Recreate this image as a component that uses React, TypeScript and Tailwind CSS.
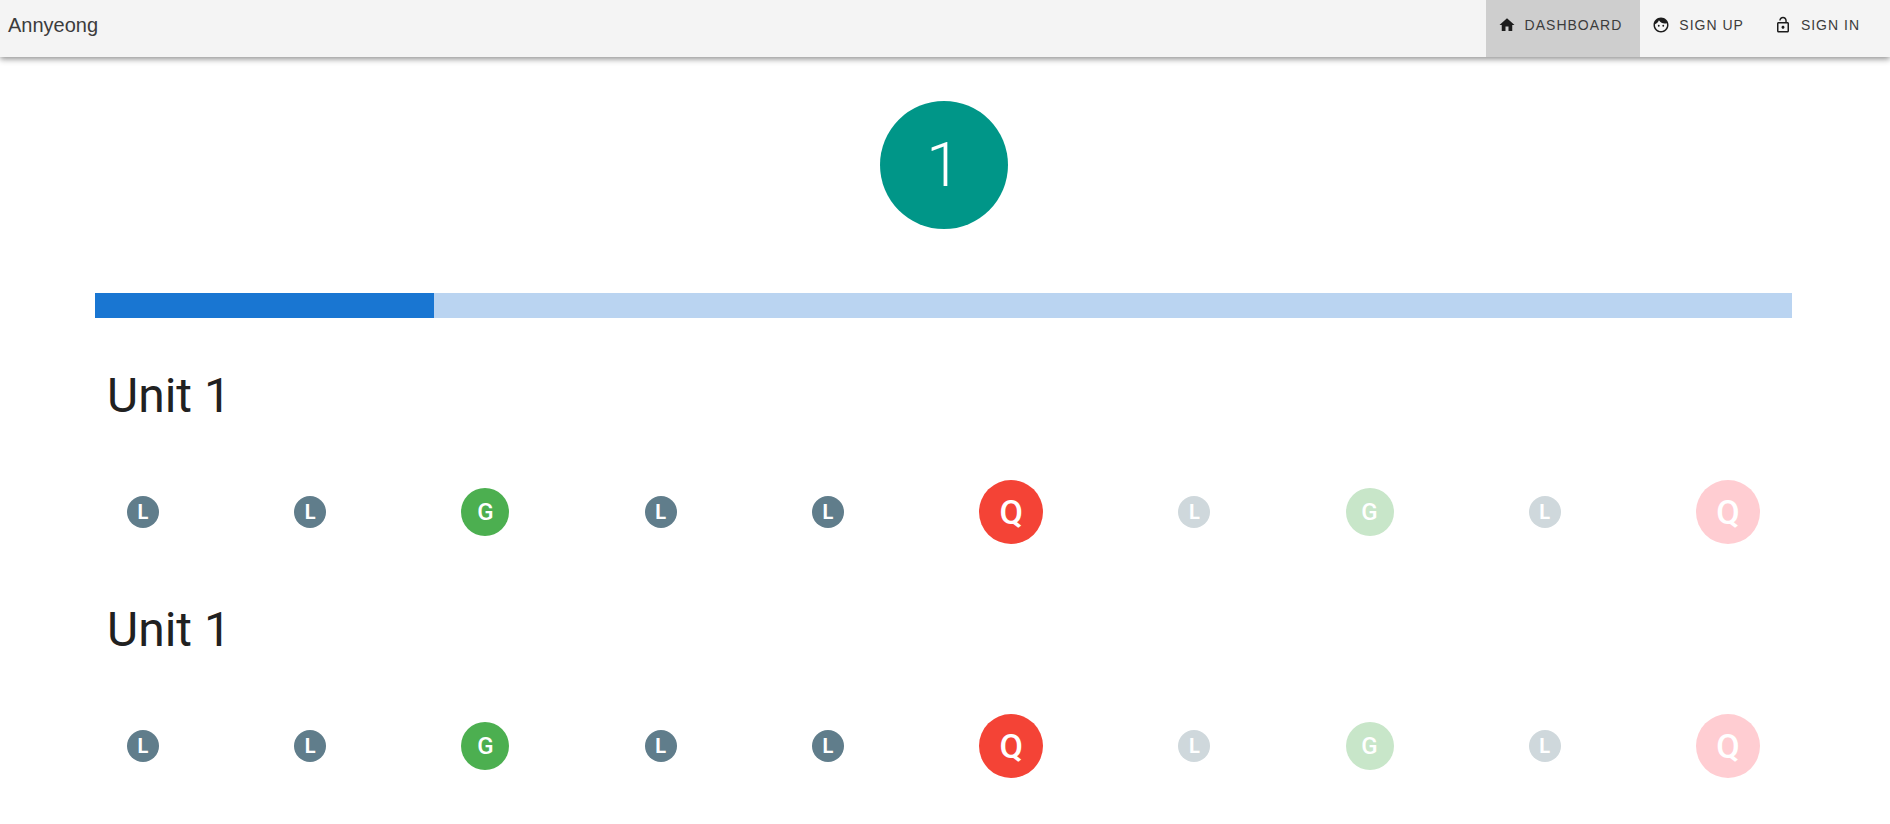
import { MdFace, MdHome, MdLockOpen } from "react-icons/md";
import type { IconType } from "react-icons";

type Step = { kind: "L" | "G" | "Q"; done: boolean };

const navItems: { label: string; icon: IconType; active: boolean }[] = [
  { label: "DASHBOARD", icon: MdHome, active: true },
  { label: "SIGN UP", icon: MdFace, active: false },
  { label: "SIGN IN", icon: MdLockOpen, active: false },
];

const steps: Step[] = [
  { kind: "L", done: true },
  { kind: "L", done: true },
  { kind: "G", done: true },
  { kind: "L", done: true },
  { kind: "L", done: true },
  { kind: "Q", done: true },
  { kind: "L", done: false },
  { kind: "G", done: false },
  { kind: "L", done: false },
  { kind: "Q", done: false },
];

const sizes = {
  L: "size-8 text-[20px] font-bold",
  G: "size-12 text-[24px] font-medium",
  Q: "size-16 text-[34px] font-medium",
};
const doneColors = { L: "bg-[#607d8b]", G: "bg-[#4caf50]", Q: "bg-[#f44336]" };
const pendingColors = { L: "bg-[#cfd8dc]", G: "bg-[#c8e6c9]", Q: "bg-[#ffcdd2]" };

function StepCircle({ kind, done }: Step) {
  const color = done ? doneColors[kind] : pendingColors[kind];
  return (
    <button
      type="button"
      className={`flex shrink-0 items-center justify-center rounded-full leading-none text-white ${sizes[kind]} ${color}`}
    >
      {kind}
    </button>
  );
}

function Unit({ title }: { title: string }) {
  return (
    <section className="pb-[50px]">
      <h2 className="pl-3 text-[48px] leading-[48px] text-[#212121]">{title}</h2>
      <div className="mt-12 flex items-center justify-between px-8 py-3">
        {steps.map((step, i) => (
          <StepCircle key={i} {...step} />
        ))}
      </div>
    </section>
  );
}

export default function App() {
  return (
    <div className="min-h-screen bg-white font-['Roboto',sans-serif]">
      <header className="flex h-[57px] items-stretch justify-between bg-[#f4f4f4] pr-3 pl-2 font-['Liberation_Sans',sans-serif] shadow-[0_2px_6px_rgba(0,0,0,0.45)]">
        <a href="#" className="flex items-center pb-[7px] text-[20px] text-[#3c3c3c]">
          Annyeong
        </a>
        <nav className="flex">
          {navItems.map(({ label, icon: Icon, active }) => (
            <a
              key={label}
              href="#"
              className={`flex items-center gap-[9px] pr-[18px] pb-[7px] pl-3 text-[14px] tracking-[1px] text-[#3c3c3c] ${active ? "bg-[#cecece]" : ""}`}
            >
              <Icon size={18} className="text-[#1c1c1c]" />
              {label}
            </a>
          ))}
        </nav>
      </header>
      <main className="mr-[98px] ml-[95px] pt-11">
        <div className="mx-auto flex size-32 items-center justify-center rounded-full bg-[#009688] text-[62px] leading-none font-light text-white">
          1
        </div>
        <div
          role="progressbar"
          aria-label="Course progress"
          aria-valuenow={20}
          className="mt-16 mb-[54px] h-[25px] bg-[#bad4f1]"
        >
          <div className="h-full w-1/5 bg-[#1976d2]" />
        </div>
        <Unit title="Unit 1" />
        <Unit title="Unit 1" />
      </main>
    </div>
  );
}
